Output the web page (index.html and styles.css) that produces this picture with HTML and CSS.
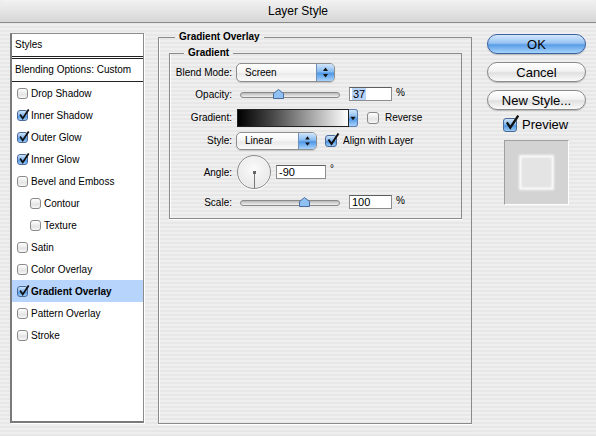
FILE: index.html
```html
<!DOCTYPE html>
<html>
<head>
    <title>Layer Style</title>
    <link rel="stylesheet" href="styles.css">
</head>
<body>
    <div class="titlebar">Layer Style</div>
    <div class="main">
        <div class="list">
            <div class="list-head">Styles</div>
            <div class="list-blend">Blending Options: Custom</div>
            <div class="item"><span class="cb"></span>Drop Shadow</div>
            <div class="item"><span class="cb on"><svg viewBox="0 0 14 14"><path d="M2.5 6.5 L5.5 11 L12.5 0.5"/></svg></span>Inner Shadow</div>
            <div class="item"><span class="cb on"><svg viewBox="0 0 14 14"><path d="M2.5 6.5 L5.5 11 L12.5 0.5"/></svg></span>Outer Glow</div>
            <div class="item"><span class="cb on"><svg viewBox="0 0 14 14"><path d="M2.5 6.5 L5.5 11 L12.5 0.5"/></svg></span>Inner Glow</div>
            <div class="item"><span class="cb"></span>Bevel and Emboss</div>
            <div class="item sub"><span class="cb"></span>Contour</div>
            <div class="item sub"><span class="cb"></span>Texture</div>
            <div class="item"><span class="cb"></span>Satin</div>
            <div class="item"><span class="cb"></span>Color Overlay</div>
            <div class="item selected"><span class="cb on"><svg viewBox="0 0 14 14"><path d="M2.5 6.5 L5.5 11 L12.5 0.5"/></svg></span><b>Gradient Overlay</b></div>
            <div class="item"><span class="cb"></span>Pattern Overlay</div>
            <div class="item"><span class="cb"></span>Stroke</div>
        </div>

        <fieldset class="group outer">
            <legend>Gradient Overlay</legend>
            <fieldset class="group inner">
                <legend>Gradient</legend>
                <div class="form">
                    <label>Blend Mode:</label>
                    <div class="ctl">
                        <div class="popup blend"><span>Screen</span><span class="arrows"><svg viewBox="0 0 17 17"><path d="M6 7 L8.5 3.5 L11 7 Z M6 10 L8.5 13.5 L11 10 Z"/></svg></span></div>
                    </div>

                    <label>Opacity:</label>
                    <div class="ctl">
                        <div class="slider"><div class="track"></div><span class="thumb" style="left: 37%"><svg viewBox="0 0 11 10"><path d="M0.5 9.5 L0.5 4.5 L5.5 0.5 L10.5 4.5 L10.5 9.5 Z"/></svg></span></div>
                        <div class="num"><span class="sel">37</span></div>
                        <span class="unit">%</span>
                    </div>

                    <label>Gradient:</label>
                    <div class="ctl">
                        <div class="grad"></div>
                        <div class="grad-btn"><svg viewBox="0 0 9 18"><path d="M1.5 7.5 L7.5 7.5 L4.5 11.5 Z"/></svg></div>
                        <span class="cb big rev"></span>
                        <span class="opt">Reverse</span>
                    </div>

                    <label>Style:</label>
                    <div class="ctl">
                        <div class="popup style"><span>Linear</span><span class="arrows"><svg viewBox="0 0 17 17"><path d="M6 7 L8.5 3.5 L11 7 Z M6 10 L8.5 13.5 L11 10 Z"/></svg></span></div>
                        <span class="cb big on align"><svg viewBox="0 0 14 14"><path d="M2.5 6.5 L5.5 11 L12.5 0.5"/></svg></span>
                        <span class="opt">Align with Layer</span>
                    </div>

                    <label>Angle:</label>
                    <div class="ctl">
                        <div class="dial"><span class="hand"></span><span class="hub"></span></div>
                        <div class="num wide">-90</div>
                        <span class="deg">°</span>
                    </div>

                    <label>Scale:</label>
                    <div class="ctl">
                        <div class="slider"><div class="track"></div><span class="thumb" style="left: 62%"><svg viewBox="0 0 11 10"><path d="M0.5 9.5 L0.5 4.5 L5.5 0.5 L10.5 4.5 L10.5 9.5 Z"/></svg></span></div>
                        <div class="num">100</div>
                        <span class="unit">%</span>
                    </div>
                </div>
            </fieldset>
        </fieldset>

        <div class="side">
            <button class="btn default">OK</button>
            <button class="btn">Cancel</button>
            <button class="btn">New Style...</button>
            <div class="preview-check">
                <span class="cb large on"><svg viewBox="0 0 14 14"><path d="M2.5 6.5 L5.5 11 L12.5 0.5"/></svg></span>
                <span>Preview</span>
            </div>
            <div class="preview"><div class="swatch"></div></div>
        </div>
    </div>
</body>
</html>
```

FILE: styles.css
```css
body {
    margin: 0;
    width: 596px;
    height: 436px;
    overflow: hidden;
    font-family: "Liberation Sans", Arial, sans-serif;
    font-size: 10px;
    color: #000;
    background: repeating-linear-gradient(to bottom, #efefef 0, #efefef 2px, #e7e7e7 2px, #e7e7e7 4px);
}
.titlebar {
    height: 22px;
    line-height: 22px;
    text-align: center;
    font-size: 12px;
    border-bottom: 1px solid #8a8a8a;
    border-radius: 5px 5px 0 0;
    background: linear-gradient(to bottom, #f2f2f2, #d6d6d6);
}
.main {
    display: flex;
    align-items: flex-start;
    padding-left: 10px;
}

/* style list */
.list {
    box-sizing: border-box;
    width: 134px;
    height: 390px;
    margin-top: 10px;
    background: #fff;
    border: 1px solid #8c8c8c;
    border-left: 2px solid #7a7a7a;
    border-bottom: 2px solid #7a7a7a;
    box-shadow: 1px 1px 0 #fff;
}
.list-head {
    height: 22px;
    line-height: 22px;
    padding-left: 3px;
    border-bottom: 3px double #222;
}
.list-blend {
    height: 22px;
    line-height: 22px;
    padding-left: 3px;
    border-bottom: 1px solid #222;
}
.item {
    height: 22px;
    display: flex;
    align-items: center;
    padding-left: 5px;
}
.item.sub { padding-left: 18px; }
.item.selected { background: #b6d4fc; }
.item b { font-weight: bold; }
.item .cb { margin-right: 3px; }

/* aqua checkboxes */
.cb {
    position: relative;
    box-sizing: border-box;
    display: inline-block;
    width: 11px;
    height: 11px;
    border: 1px solid #8a8a8a;
    border-radius: 3px;
    background: linear-gradient(to bottom, #ffffff, #e4e4e4 60%, #f6f6f6);
    flex: none;
}
.cb.on {
    border-color: #4a6a9a;
    background: linear-gradient(to bottom, #cfe3f9, #7db3ec 50%, #4e96e4 55%, #9ccbf6);
}
.cb svg {
    position: absolute;
    left: 0;
    top: -2px;
    width: 12px;
    height: 12px;
    fill: none;
    stroke: #111;
    stroke-width: 2;
}
.cb.big { width: 12px; height: 12px; }
.cb.big svg { width: 14px; height: 14px; top: -3px; }
.cb.large { width: 14px; height: 14px; }
.cb.large svg { width: 16px; height: 16px; top: -4px; }

/* group boxes */
.group {
    margin: 0;
    border: 1px solid #8a8a8a;
    box-shadow: inset 1px 0 0 #fff, 0 1px 0 #fff;
    min-inline-size: 0;
}
.group legend {
    font-weight: bold;
    font-size: 10px;
    line-height: 12px;
    padding: 0 4px;
}
.outer {
    box-sizing: border-box;
    width: 314px;
    height: 393px;
    margin: 8px 0 0 14px;
    padding: 4px 9px 0 10px;
}
.outer > legend { margin-left: 6px; }
.inner {
    padding: 3px 0 7px 4px;
}
.inner > legend { margin-left: 10px; }

.form {
    display: grid;
    grid-template-columns: 58px 1fr;
    grid-template-rows: 21px 22px 25px 21px 42px 18px;
    column-gap: 4px;
    align-items: center;
}
.form label { text-align: right; }
.ctl {
    display: flex;
    align-items: center;
}

/* popups */
.popup {
    box-sizing: border-box;
    height: 19px;
    display: flex;
    align-items: center;
    justify-content: space-between;
    border: 1px solid #8e8e8e;
    border-radius: 5px;
    background: linear-gradient(to bottom, #ffffff, #f4f4f4 50%, #e9e9e9 55%, #fbfbfb);
    box-shadow: 0 1px 1px rgba(0,0,0,0.15);
    overflow: hidden;
}
.popup > span:first-child { padding-left: 8px; font-size: 10px; }
.popup.blend { width: 99px; }
.popup.style { width: 81px; height: 18px; }
.arrows {
    width: 17px;
    height: 100%;
    border-left: 1px solid #6e8fb8;
    background: linear-gradient(to bottom, #d3e6fb, #86bbf1 45%, #4f97e6 55%, #a9d3fb);
}
.arrows svg { width: 17px; height: 100%; fill: #111; display: block; }

/* sliders */
.slider {
    position: relative;
    width: 104px;
    height: 12px;
}
.track {
    position: absolute;
    left: 4px;
    right: 0;
    top: 4px;
    height: 4px;
    border: 1px solid #8a8a8a;
    border-radius: 3px;
    background: linear-gradient(to bottom, #b8b8b8, #f0f0f0);
}
.thumb {
    position: absolute;
    top: 1px;
    margin-left: -1px;
    width: 11px;
    height: 10px;
}
.thumb svg {
    width: 11px;
    height: 10px;
    display: block;
    fill: #8fc0f2;
    stroke: #4b6c9a;
}
.num {
    box-sizing: border-box;
    width: 43px;
    height: 14px;
    margin-left: 9px;
    padding-left: 2px;
    line-height: 12px;
    font-size: 11px;
    background: #fff;
    border: 1px solid #8d8d8d;
    border-top-color: #5e5e5e;
}
.num.wide { width: 50px; margin-left: 5px; }
.sel { background: #b6d4fc; padding: 0 1px; }
.unit { margin-left: 4px; margin-top: -4px; }
.deg { margin-left: 4px; margin-top: -8px; font-size: 10px; }

/* gradient */
.grad {
    box-sizing: border-box;
    width: 112px;
    height: 18px;
    margin-left: 1px;
    border: 1px solid #222;
    background: linear-gradient(to right, #000, #444 30%, #fff);
}
.grad-btn {
    box-sizing: border-box;
    width: 9px;
    height: 18px;
    border: 1px solid #5a7fb0;
    border-left: none;
    border-radius: 0 3px 3px 0;
    background: linear-gradient(to bottom, #d3e6fb, #86bbf1 45%, #4f97e6 55%, #a9d3fb);
}
.grad-btn svg { width: 8px; height: 16px; display: block; fill: #111; }
.rev { margin-left: 9px; }
.align { margin-left: 8px; }
.opt { margin-left: 6px; font-size: 10px; }

/* angle dial */
.dial {
    position: relative;
    box-sizing: border-box;
    width: 34px;
    height: 34px;
    margin-left: 1px;
    border: 1px solid #8a8a8a;
    border-radius: 50%;
    background: radial-gradient(circle at 50% 40%, #fbfbfb, #e2e2e2);
    box-shadow: inset 0 0 2px #fff, 0 1px 0 #fff;
}
.hand {
    position: absolute;
    left: 16px;
    top: 16px;
    width: 1px;
    height: 16px;
    background: #777;
}
.hub {
    position: absolute;
    left: 15px;
    top: 15px;
    width: 3px;
    height: 3px;
    background: #666;
}

/* right column */
.side {
    width: 99px;
    margin: 11px 0 0 15px;
    display: flex;
    flex-direction: column;
}
.btn {
    height: 20px;
    margin: 0 0 8px 0;
    padding: 0;
    font-family: "Liberation Sans", Arial, sans-serif;
    font-size: 13px;
    color: #000;
    border: 1px solid #8a8a8a;
    border-radius: 10px;
    background: linear-gradient(to bottom, #ffffff, #f2f2f2 45%, #e0e0e0 55%, #fbfbfb);
    box-shadow: 0 1px 1px rgba(0,0,0,0.2);
}
.btn.default {
    border-color: #3d62a0;
    background: linear-gradient(to bottom, #d4e7fb, #97c4f3 45%, #5a9de8 55%, #a6d4fb);
}
.preview-check {
    display: flex;
    align-items: center;
    height: 15px;
    margin-top: -1px;
    padding-left: 16px;
    font-size: 13px;
}
.preview-check span + span { margin-left: 5px; }
.preview {
    box-sizing: border-box;
    width: 65px;
    height: 65px;
    margin: 8px 0 0 17px;
    background: #d3d3d3;
    border: 1px solid #a0a0a0;
    border-right-color: #fff;
    border-bottom-color: #fff;
    display: flex;
    align-items: center;
    justify-content: center;
}
.swatch {
    width: 31px;
    height: 31px;
    background: #e4e4e4;
    box-shadow: 0 0 2px 2px #fafafa, inset 0 0 3px #fff;
}
```
